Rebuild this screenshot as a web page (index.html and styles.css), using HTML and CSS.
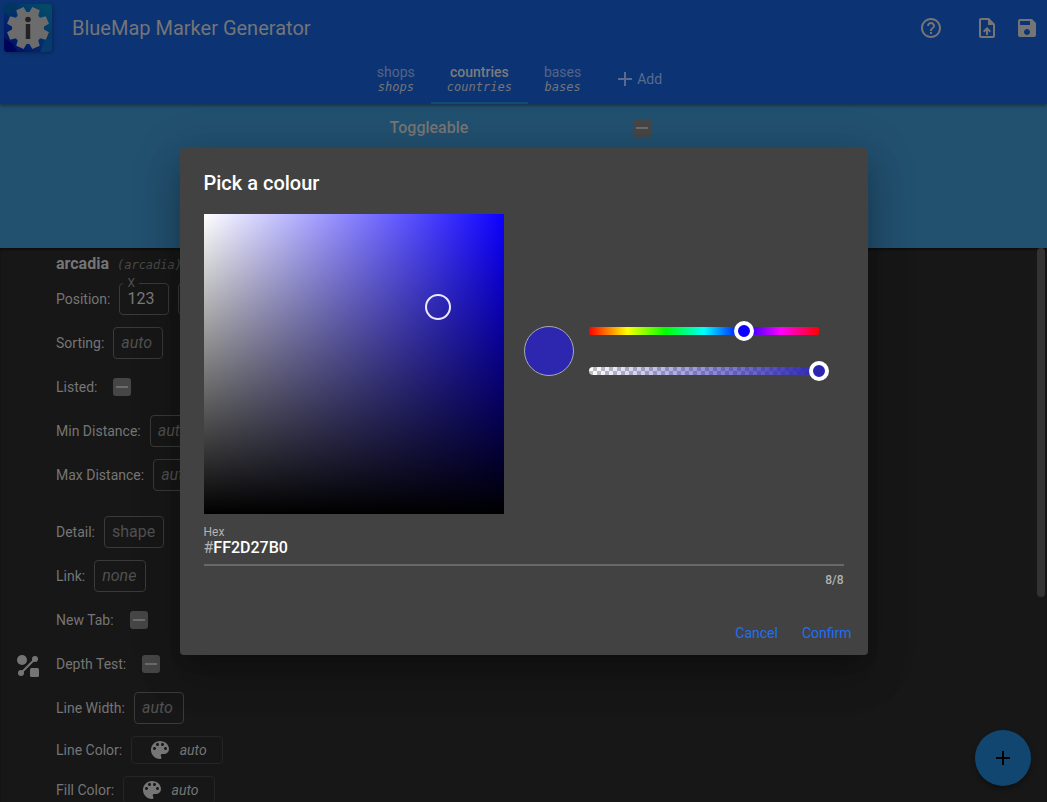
FILE: index.html
```html
<!DOCTYPE html>
<html lang="en">
<head>
<meta charset="utf-8">
<meta name="viewport" content="width=device-width, initial-scale=1">
<title>BlueMap Marker Generator</title>
<link rel="stylesheet" href="styles.css">
</head>
<body>
<header class="appbar">
  <div class="toolbar">
    <svg class="logo" viewBox="0 0 48 48" aria-hidden="true">
      <defs>
        <linearGradient id="sea" x1="0" y1="1" x2="1" y2="0">
          <stop offset="0" stop-color="#000860"/><stop offset=".35" stop-color="#02246c"/><stop offset=".75" stop-color="#04406c"/><stop offset="1" stop-color="#054e6a"/>
        </linearGradient>
        <clipPath id="tile"><rect width="48" height="48" rx="4"/></clipPath>
      </defs>
      <g clip-path="url(#tile)">
        <rect width="48" height="48" fill="url(#sea)"/>
        <path d="M0 0h14L6 12 0 9z" fill="#033562"/><path d="M34 0h14v10l-9-4z" fill="#044a66"/>
        <path d="M0 34l9 6 4 8H0z" fill="#000458"/><path d="M36 48l5-12 7-2v14z" fill="#053c6c"/>
      </g>
      <g fill="#6c6c6c">
        <circle cx="24" cy="24" r="16"/>
        <path d="M19 10L20 3h8l1 7z" transform="rotate(22.5 24 24)"/>
        <path d="M19 10L20 3h8l1 7z" transform="rotate(67.5 24 24)"/>
        <path d="M19 10L20 3h8l1 7z" transform="rotate(112.5 24 24)"/>
        <path d="M19 10L20 3h8l1 7z" transform="rotate(157.5 24 24)"/>
        <path d="M19 10L20 3h8l1 7z" transform="rotate(202.5 24 24)"/>
        <path d="M19 10L20 3h8l1 7z" transform="rotate(247.5 24 24)"/>
        <path d="M19 10L20 3h8l1 7z" transform="rotate(292.5 24 24)"/>
        <path d="M19 10L20 3h8l1 7z" transform="rotate(337.5 24 24)"/>
      </g>
      <circle cx="24" cy="15.500" r="2.800" fill="#222"/>
      <rect x="21.800" y="20" width="4.400" height="15" fill="#222"/>
    </svg>
    <h1 class="title">BlueMap Marker Generator</h1>
    <button class="icon-btn help" aria-label="Help">
      <svg viewBox="0 0 24 24"><path d="M11 18h2v-2h-2v2zm1-16C6.480 2 2 6.480 2 12s4.480 10 10 10 10-4.480 10-10S17.520 2 12 2zm0 18c-4.410 0-8-3.590-8-8s3.590-8 8-8 8 3.590 8 8-3.590 8-8 8zm0-14c-2.210 0-4 1.790-4 4h2c0-1.100.9-2 2-2s2 .9 2 2c0 2-3 1.750-3 5h2c0-2.250 3-2.500 3-5 0-2.210-1.790-4-4-4z"/></svg>
    </button>
    <button class="icon-btn" aria-label="Open file">
      <svg viewBox="0 0 24 24"><path d="M14 2H6c-1.100 0-1.990.9-1.990 2L4 20c0 1.100.89 2 1.990 2H18c1.100 0 2-.9 2-2V8l-6-6zm4 18H6V4h7v5h5v11zM8 15.010l1.410 1.410L11 14.840V19h2v-4.160l1.590 1.590L16 15.010 12.010 11 8 15.010z"/></svg>
    </button>
    <button class="icon-btn" aria-label="Save">
      <svg viewBox="0 0 24 24"><path d="M17 3H5c-1.110 0-2 .9-2 2v14c0 1.100.89 2 2 2h14c1.100 0 2-.9 2-2V7l-4-4zm-5 16c-1.660 0-3-1.340-3-3s1.340-3 3-3 3 1.340 3 3-1.340 3-3 3zm3-10H5V5h10v4z"/></svg>
    </button>
  </div>
  <nav class="tabs">
    <button class="tab">shops<span class="tab-id">shops</span></button>
    <button class="tab active">countries<span class="tab-id">countries</span></button>
    <button class="tab">bases<span class="tab-id">bases</span></button>
    <button class="tab add"><svg viewBox="0 0 24 24"><path d="M19 13h-6v6h-2v-6H5v-2h6V5h2v6h6v2z"/></svg>Add</button>
  </nav>
</header>

<section class="set-options">
  <div class="option">
    <label for="toggleable">Toggleable</label>
    <input class="check" type="checkbox" id="toggleable">
  </div>
</section>

<main class="markers">
  <article class="marker">
    <svg class="shape-icon" viewBox="0 0 24 24" aria-hidden="true">
      <circle cx="6" cy="6" r="5"/><circle cx="19" cy="5" r="3"/><circle cx="5" cy="19" r="3"/>
      <path d="M5 19L19 5" stroke-width="2"/><rect x="14" y="14" width="9" height="9" rx="1.500"/>
    </svg>
    <div class="details">
      <h2 class="name">arcadia <span class="marker-id">(arcadia)</span></h2>
      <div class="rows">
        <div class="row"><label for="px">Position:</label>
          <span class="notched"><label for="px">X</label><input class="box" id="px" value="123"></span>
          <input class="box" aria-label="Y"><input class="box" aria-label="Z"></div>
        <div class="row"><label for="sorting">Sorting:</label><input class="box" id="sorting" placeholder="auto"></div>
        <div class="row tick"><label for="listed">Listed:</label><input class="check" type="checkbox" id="listed"></div>
        <div class="row"><label for="min">Min Distance:</label><input class="box" id="min" placeholder="auto"></div>
        <div class="row"><label for="max">Max Distance:</label><input class="box" id="max" placeholder="auto"></div>
      </div>
      <div class="rows">
        <div class="row"><label for="detail">Detail:</label><input class="box plain" id="detail" placeholder="shape"></div>
        <div class="row"><label for="link">Link:</label><input class="box link" id="link" placeholder="none"></div>
        <div class="row tick"><label for="newtab">New Tab:</label><input class="check" type="checkbox" id="newtab"></div>
        <div class="row tick"><label for="depth">Depth Test:</label><input class="check" type="checkbox" id="depth"></div>
        <div class="row"><label for="width">Line Width:</label><input class="box" id="width" placeholder="auto"></div>
        <div class="row short"><label for="line">Line Color:</label><button class="color" id="line"><svg viewBox="0 0 24 24"><path d="M12 3c-4.970 0-9 4.030-9 9s4.030 9 9 9c.83 0 1.500-.67 1.500-1.500 0-.39-.15-.74-.39-1.010-.23-.26-.38-.61-.38-.99 0-.83.67-1.500 1.500-1.500H16c2.760 0 5-2.240 5-5 0-4.420-4.030-8-9-8zm-5.500 9c-.83 0-1.500-.67-1.500-1.500S5.670 9 6.500 9 8 9.670 8 10.500 7.330 12 6.500 12zm3-4C8.670 8 8 7.330 8 6.500S8.670 5 9.500 5s1.500.67 1.500 1.500S10.330 8 9.500 8zm5 0c-.83 0-1.500-.67-1.500-1.500S13.670 5 14.500 5s1.500.67 1.500 1.500S15.330 8 14.500 8zm3 4c-.83 0-1.500-.67-1.500-1.500S16.670 9 17.500 9s1.500.67 1.500 1.500-.67 1.500-1.500 1.500z"/></svg>auto</button></div>
        <div class="row short"><label for="fill">Fill Color:</label><button class="color" id="fill"><svg viewBox="0 0 24 24"><path d="M12 3c-4.970 0-9 4.030-9 9s4.030 9 9 9c.83 0 1.500-.67 1.500-1.500 0-.39-.15-.74-.39-1.010-.23-.26-.38-.61-.38-.99 0-.83.67-1.500 1.500-1.500H16c2.760 0 5-2.240 5-5 0-4.420-4.030-8-9-8zm-5.500 9c-.83 0-1.500-.67-1.500-1.500S5.670 9 6.500 9 8 9.670 8 10.500 7.330 12 6.500 12zm3-4C8.670 8 8 7.330 8 6.500S8.670 5 9.500 5s1.500.67 1.500 1.500S10.330 8 9.500 8zm5 0c-.83 0-1.500-.67-1.500-1.500S13.670 5 14.500 5s1.500.67 1.500 1.500S15.330 8 14.500 8zm3 4c-.83 0-1.500-.67-1.500-1.500S16.670 9 17.500 9s1.500.67 1.500 1.500-.67 1.500-1.500 1.500z"/></svg>auto</button></div>
      </div>
    </div>
  </article>
  <div class="scroll-thumb"></div>
</main>

<button class="fab" aria-label="Add marker"><svg viewBox="0 0 24 24"><path d="M19 13h-6v6h-2v-6H5v-2h6V5h2v6h6v2z"/></svg></button>

<div class="overlay">
  <form class="dialog" role="dialog" aria-labelledby="dlg-title">
    <h2 class="dialog-title" id="dlg-title">Pick a colour</h2>
    <div class="picker">
      <div class="palette"><span class="cursor"></span></div>
      <div class="controls">
        <div class="swatch"></div>
        <div class="sliders">
          <div class="slider"><div class="track hue"></div><input class="thumb-hue" type="range" aria-label="Hue" min="0" max="360" value="243"></div>
          <div class="slider"><div class="track alpha"></div><input class="thumb-alpha" type="range" aria-label="Opacity" min="0" max="255" value="255"></div>
        </div>
      </div>
    </div>
    <div class="field">
      <label for="hex">Hex</label>
      <div class="field-line"><span class="prefix">#</span><input id="hex" value="FF2D27B0" maxlength="8"></div>
      <span class="counter">8/8</span>
    </div>
    <div class="actions">
      <button type="button">Cancel</button>
      <button type="button">Confirm</button>
    </div>
  </form>
</div>
</body>
</html>
```
FILE: styles.css
```css
* { box-sizing: border-box; }

body {
  margin: 0;
  height: 100vh;
  display: flex;
  flex-direction: column;
  overflow: hidden;
  background: #171717;
  color: #757575;
  font: 400 14px/16px Roboto, sans-serif;
}

h1, h2 { margin: 0; font-weight: 400; }
button, input { font: inherit; color: inherit; background: none; border: 0; padding: 0; margin: 0; outline: 0; }
button { cursor: pointer; }
svg { fill: currentColor; display: block; }

/* App bar */
.appbar {
  position: relative;
  background: #0c3475;
  box-shadow: 0 1px 4px rgba(0, 0, 0, .5);
}
.toolbar { display: flex; align-items: center; height: 56px; padding: 0 8px 0 4px; }
.logo { width: 48px; height: 48px; filter: drop-shadow(1px 1px 2px rgba(0, 0, 0, .3)); }
.title { flex: 1; margin-left: 20px; font-size: 20px; line-height: 24px; }
.icon-btn { width: 24px; height: 24px; margin-left: 16px; }
.icon-btn.help { margin-right: 16px; }

.tabs { display: flex; justify-content: center; height: 48px; }
.tab {
  display: flex;
  flex-direction: column;
  align-items: center;
  justify-content: center;
  padding: 0 16px;
  color: #546486;
  border-bottom: 2px solid transparent;
}
.tab-id { color: #757575; font: italic 400 12px/14px "DejaVu Sans Mono", monospace; }
.tab.active { color: #7b7b7b; border-color: #0f4a7a; font-weight: 500; }
.tab.add { flex-direction: row; padding-right: 24px; color: #586b8d; }
.tab.add svg { width: 24px; height: 24px; }

.set-options {
  height: 144px;
  padding: 15px 16px;
  display: flex;
  justify-content: center;
  align-items: flex-start;
  background: #22506f;
}
.option { display: flex; align-items: center; gap: 165px; margin-right: 6px; font-size: 16px; line-height: 18px; font-weight: 500; }

.check {
  appearance: none;
  width: 18px;
  height: 18px;
  border-radius: 3px;
  background: #464646;
  display: grid;
  place-items: center;
}
.check::before { content: ""; width: 12px; height: 2px; background: #6c6c6c; }

/* Marker list */
.markers { position: relative; flex: 1; min-height: 0; overflow: hidden; box-shadow: inset 0 2px 2px rgba(0, 0, 0, .4); }
.marker { display: flex; align-items: center; padding: 6px 16px 0; }
.shape-icon { flex: none; width: 24px; height: 24px; margin-right: 16px; stroke: none; }
.shape-icon path { stroke: currentColor; }
.details { flex: 1; padding-bottom: 248px; display: flex; flex-direction: column; }
.name { font-size: 16px; line-height: 18px; font-weight: 700; padding: 1px 0 10px; }
.marker-id { margin-left: 4px; color: #4a4a4a; font: italic 400 12px/14px "DejaVu Sans Mono", monospace; }
.rows { display: flex; flex-direction: column; gap: 12px; margin-bottom: 25px; }
.row { display: flex; align-items: center; gap: 9px; height: 32px; }
.row.tick { gap: 16px; }
.row.short { height: 28px; }
.box {
  width: 50px;
  height: 32px;
  padding: 0 7px 2px;
  border: 1px solid #3a3a3a;
  border-radius: 4px;
  font-size: 16px;
  color: #7a7a7a;
}
.box::placeholder { color: #505050; font-style: italic; opacity: 1; }
.box.plain { width: 60px; }
.box.plain::placeholder { font-style: normal; }
.box.link { width: 52px; }
.notched { position: relative; }
.notched label {
  position: absolute;
  left: 4px;
  top: -8px;
  padding: 0 4px;
  background: #171717;
  color: #505050;
  font-size: 12px;
}
.notched .box { display: block; }
.color {
  display: flex;
  align-items: center;
  justify-content: center;
  gap: 8px;
  width: 92px;
  height: 28px;
  border: 1px solid #252525;
  border-radius: 4px;
  font-style: italic;
}
.color svg { width: 24px; height: 24px; }
.scroll-thumb { position: absolute; top: 0; right: 2px; width: 8px; height: 63%; border-radius: 4px; background: #333; }

.fab {
  position: absolute;
  right: 16px;
  bottom: 16px;
  width: 56px;
  height: 56px;
  border-radius: 50%;
  background: #10466f;
  color: #000;
  display: grid;
  place-items: center;
  box-shadow: 0 3px 5px rgba(0, 0, 0, .3);
}
.fab svg { width: 24px; height: 24px; }

/* Colour dialog */
.overlay { position: absolute; inset: 0; display: grid; place-items: center; }
.dialog {
  width: min(688px, 100% - 32px);
  padding: 24px 24px 8px;
  border-radius: 4px;
  background: #424242;
  color: #fff;
  box-shadow: 0 11px 15px -7px rgba(0, 0, 0, .2), 0 24px 38px 3px rgba(0, 0, 0, .14), 0 9px 46px 8px rgba(0, 0, 0, .12);
}
.dialog-title { font-size: 20px; line-height: 22px; font-weight: 500; margin-bottom: 20px; }
.picker { display: flex; align-items: center; }
.palette {
  position: relative;
  flex: none;
  width: 300px;
  height: 300px;
  background: linear-gradient(to top, #000, transparent), linear-gradient(to right, #fff, #0d00ff);
}
.cursor {
  position: absolute;
  left: 78%;
  top: 31%;
  width: 26px;
  height: 26px;
  margin: -13px;
  border: 2px solid #ebe9ff;
  border-radius: 50%;
}
.controls { flex: 1; display: flex; align-items: center; padding: 0 15px 26px 20px; }
.swatch { flex: none; width: 50px; height: 50px; border: 1px solid #aaa; border-radius: 50%; background: #2d27b0; }
.sliders { flex: 1; display: grid; gap: 20px; margin-left: 5px; }
.slider { display: grid; align-items: center; height: 20px; }
.slider > * { grid-area: 1 / 1; }
.track { height: 8px; margin: 0 10px; border-radius: 4px; }
.hue { border-radius: 2px; background: linear-gradient(to right, #f00, #ff0, #0f0, #0ff, #00f, #f0f, #f00); }
.alpha {
  background:
    linear-gradient(to right, rgba(45, 39, 176, 0), #2d27b0),
    repeating-conic-gradient(#c0c0c0 0 25%, #fff 0 50%) 0 0 / 8px 8px;
}
.slider input { appearance: none; width: 100%; height: 20px; }
.slider input::-webkit-slider-thumb {
  appearance: none;
  width: 20px;
  height: 20px;
  border: 4px solid #fff;
  border-radius: 50%;
}
.thumb-hue::-webkit-slider-thumb { background: #0d00ff; }
.thumb-alpha::-webkit-slider-thumb { background: #2d27b0; }

.field { display: grid; margin-top: 11px; font-size: 12px; line-height: 14px; color: #b3b3b3; }
.field-line { display: flex; padding-bottom: 7px; border-bottom: 2px solid #686868; font-size: 16px; line-height: 18px; }
.field-line input { flex: 1; min-width: 0; height: 18px; color: #fff; font-weight: 500; }
.counter { justify-self: end; margin-top: 7px; font-weight: 500; }
.actions { display: flex; justify-content: flex-end; gap: 8px; margin: 32px -16px 0 0; }
.actions button { height: 28px; padding: 0 8px; color: #1e6ff5; }
```
